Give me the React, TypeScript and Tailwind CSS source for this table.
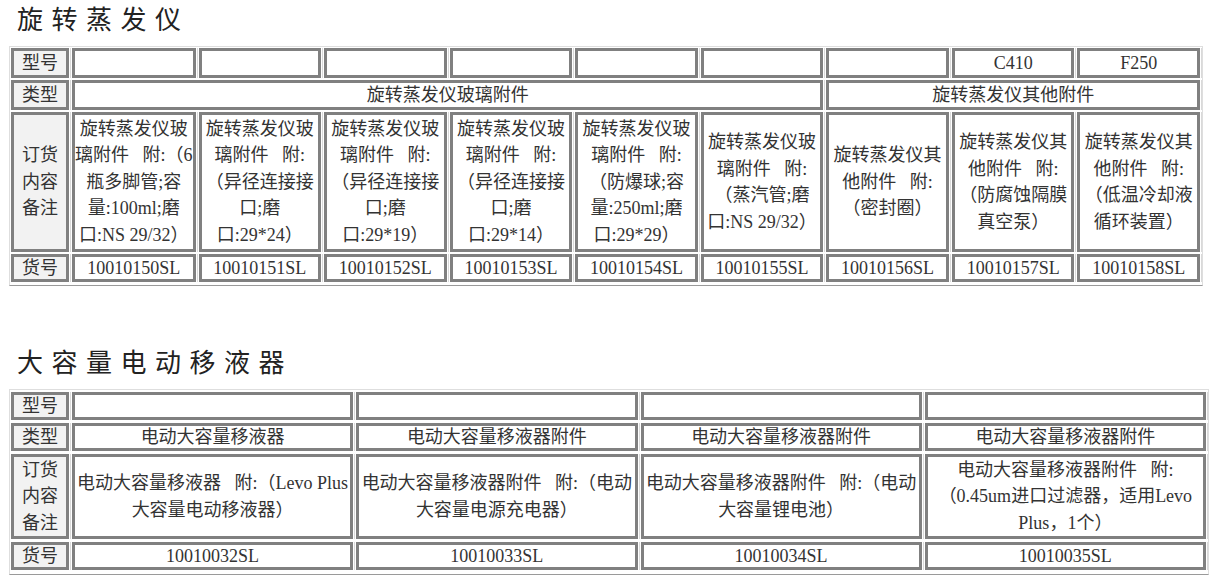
import * as React from "react";

const SERIF = "font-['Liberation_Serif','Noto_Sans_CJK_SC',serif]";
const GAP = "\u00a0\u00a0\u00a0";

type CellProps = {
  lines?: string[];
  label?: boolean;
  span?: string;
  leading?: string;
};

function Cell({ lines = [], label, span = "", leading = "leading-[26.5px]" }: CellProps) {
  return (
    <div
      className={`${span} border-[3px] border-[#808080] flex flex-col items-center justify-center text-center whitespace-nowrap shadow-[1px_0_0_0_#fff,2px_0_0_0_#d9d9d9] ${
        label ? "bg-[#f2f2f2]" : "bg-white"
      }`}
    >
      {lines.map((l, i) => (
        <div key={i} className={leading}>
          {l}
        </div>
      ))}
    </div>
  );
}

function Title({ children }: { children: string }) {
  return (
    <div className="h-[46px] leading-[42px] ml-[8px] text-[26px] tracking-[8.5px] text-[#222]">
      {children}
    </div>
  );
}

const evapNotes: string[][] = [
  ["旋转蒸发仪玻", `璃附件${GAP}附:（6`, "瓶多脚管;容", "量:100ml;磨", "口:NS 29/32）"],
  ["旋转蒸发仪玻", `璃附件${GAP}附:`, "（异径连接接", "口;磨", "口:29*24）"],
  ["旋转蒸发仪玻", `璃附件${GAP}附:`, "（异径连接接", "口;磨", "口:29*19）"],
  ["旋转蒸发仪玻", `璃附件${GAP}附:`, "（异径连接接", "口;磨", "口:29*14）"],
  ["旋转蒸发仪玻", `璃附件${GAP}附:`, "（防爆球;容", "量:250ml;磨", "口:29*29）"],
  ["旋转蒸发仪玻", `璃附件${GAP}附:`, "（蒸汽管;磨", "口:NS 29/32）"],
  ["旋转蒸发仪其", `他附件${GAP}附:`, "（密封圈）"],
  ["旋转蒸发仪其", `他附件${GAP}附:`, "（防腐蚀隔膜", "真空泵）"],
  ["旋转蒸发仪其", `他附件${GAP}附:`, "（低温冷却液", "循环装置）"],
];

const evapModels = ["", "", "", "", "", "", "", "C410", "F250"];
const evapCodes = Array.from({ length: 9 }, (_, i) => `1001015${i}SL`);

const pipetteTypes = ["电动大容量移液器", "电动大容量移液器附件", "电动大容量移液器附件", "电动大容量移液器附件"];
const pipetteNotes: string[][] = [
  [`电动大容量移液器${GAP}附:（Levo Plus`, "大容量电动移液器）"],
  [`电动大容量移液器附件${GAP}附:（电动`, "大容量电源充电器）"],
  [`电动大容量移液器附件${GAP}附:（电动`, "大容量锂电池）"],
  [`电动大容量移液器附件${GAP}附:`, "（0.45um进口过滤器，适用Levo", "Plus，1个）"],
];
const pipetteCodes = ["10010032SL", "10010033SL", "10010034SL", "10010035SL"];

export default function App() {
  return (
    <div className={`${SERIF} min-h-[588px] w-[1221px] bg-white pl-[9px] text-[18px] text-[#333]`}>
      {/* 旋转蒸发仪 */}
      <Title>旋转蒸发仪</Title>
      <div className="w-fit border border-[#dedede] border-b-[#9a9a9a] pl-[1px] pr-[2px] pt-[1px] pb-[3px]">
        <div className="grid w-[1189px] grid-cols-[58px_repeat(9,1fr)] grid-rows-[30px_30px_140px_28px] gap-x-[3px] gap-y-[2px]">
          <Cell label lines={["型号"]} leading="leading-[24px]" />
          {evapModels.map((m, i) => (
            <Cell key={i} lines={m ? [m] : []} leading="leading-[24px]" />
          ))}

          <Cell label lines={["类型"]} leading="leading-[24px]" />
          <Cell span="col-span-6" lines={["旋转蒸发仪玻璃附件"]} leading="leading-[24px]" />
          <Cell span="col-span-3" lines={["旋转蒸发仪其他附件"]} leading="leading-[24px]" />

          <Cell label lines={["订货", "内容", "备注"]} />
          {evapNotes.map((n, i) => (
            <Cell key={i} lines={n} />
          ))}

          <Cell label lines={["货号"]} leading="leading-[22px]" />
          {evapCodes.map((c) => (
            <Cell key={c} lines={[c]} leading="leading-[22px]" />
          ))}
        </div>
      </div>

      {/* 大容量电动移液器 */}
      <div className="mt-[57px]">
        <Title>大容量电动移液器</Title>
      </div>
      <div className="w-fit border border-[#dedede] border-b-[#9a9a9a] pl-[1px] pr-[2px] pt-[2px] pb-[4px]">
        <div className="grid w-[1195px] grid-cols-[58px_repeat(4,1fr)] grid-rows-[28px_28px_85px_28px] gap-[3px]">
          <Cell label lines={["型号"]} leading="leading-[22px]" />
          {pipetteCodes.map((c) => (
            <Cell key={c} />
          ))}

          <Cell label lines={["类型"]} leading="leading-[22px]" />
          {pipetteTypes.map((t, i) => (
            <Cell key={i} lines={[t]} leading="leading-[22px]" />
          ))}

          <Cell label lines={["订货", "内容", "备注"]} />
          {pipetteNotes.map((n, i) => (
            <Cell key={i} lines={n} />
          ))}

          <Cell label lines={["货号"]} leading="leading-[22px]" />
          {pipetteCodes.map((c) => (
            <Cell key={c} lines={[c]} leading="leading-[22px]" />
          ))}
        </div>
      </div>
    </div>
  );
}
